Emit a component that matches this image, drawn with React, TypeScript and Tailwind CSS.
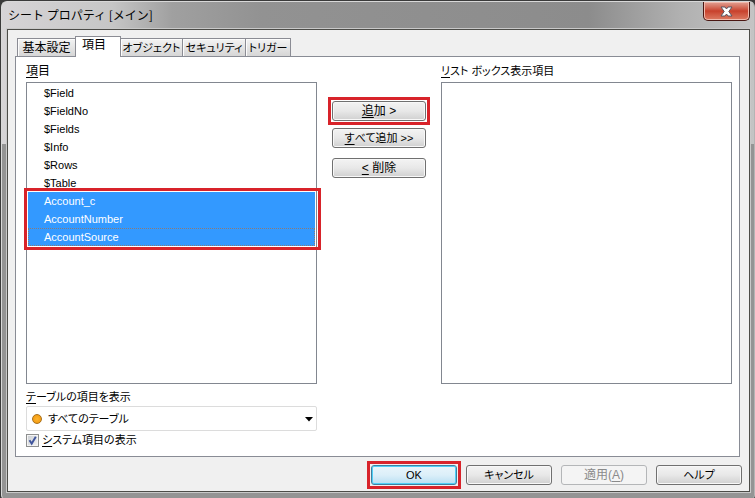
import { useState } from "react";
import type { ReactNode } from "react";
import clsx from "clsx";

const TABS = ["基本設定", "項目", "オブジェクト", "セキュリティ", "トリガー"];

const FIELDS = [
  "$Field",
  "$FieldNo",
  "$Fields",
  "$Info",
  "$Rows",
  "$Table",
  "Account_c",
  "AccountNumber",
  "AccountSource",
];

type PushButtonProps = {
  children: ReactNode;
  className?: string;
  isDefault?: boolean;
  disabled?: boolean;
  marked?: boolean;
};

const AccessKey = ({ children }: { children: ReactNode }) => (
  <span className="underline underline-offset-2">{children}</span>
);

const PushButton = ({
  children,
  className,
  isDefault,
  disabled,
  marked,
}: PushButtonProps) => (
  <div className={clsx("relative", className)}>
    <button
      type="button"
      disabled={disabled}
      className={clsx(
        "flex h-5 w-full items-center justify-center rounded-[3px] border whitespace-pre",
        disabled && "border-[#b4b6b8] bg-[#f4f4f4] text-[#8a8a8a]",
        isDefault &&
          "border-[#3f7f9f] bg-linear-to-b from-[#e9f5fb] via-[#dceff9] via-50% to-[#b8dff3] shadow-[inset_0_0_0_1px_#4fd0f7]",
        !disabled &&
          !isDefault &&
          "border-[#707070] bg-linear-to-b from-[#f3f3f3] via-[#e8e8e8] via-50% to-[#d0d0d0] shadow-[inset_0_0_0_1px_#f8f8f8]",
      )}
    >
      {children}
    </button>
    {marked && (
      <div className="pointer-events-none absolute -inset-1 border-3 border-[#d8232a]" />
    )}
  </div>
);

const TitleBar = () => (
  <header className="flex h-[27px] items-start justify-between pl-px">
    <h1 className="pt-[3px] font-['Noto_Sans_CJK_JP',sans-serif] text-xs leading-5 text-black">
      シート プロパティ [メイン]
    </h1>
    <button
      type="button"
      aria-label="閉じる"
      className="flex h-[19px] w-[47px] items-center justify-center rounded-b-[5px] border border-t-0 border-[#4a1712] bg-linear-to-b from-[#e0a093] from-0% via-[#c8402c] via-50% to-[#dc7a62] shadow-[inset_0_0_0_1px_#f0b9ac]"
    >
      <svg width="13" height="11" viewBox="0 0 13 11">
        <path
          d="M1 1H5L6.500 3L8 1H12L8.800 5.500L12 10H8L6.500 8L5 10H1L4.200 5.500Z"
          fill="#ffffff"
          stroke="#5a5560"
          strokeWidth="1"
        />
      </svg>
    </button>
  </header>
);

const TabStrip = () => {
  const [active, setActive] = useState("項目");

  return (
    <div role="tablist" className="flex items-end pl-0.5">
      {TABS.map((tab) => (
        <button
          key={tab}
          type="button"
          role="tab"
          aria-selected={tab === active}
          onClick={() => setActive(tab)}
          className={clsx(
            "flex items-center justify-center border border-b-0 border-[#8b8c94] whitespace-nowrap",
            tab === active
              ? "-mb-px h-[21px] bg-white pr-2 pb-1"
              : "h-[18px] bg-linear-to-b from-[#f3f3f3] to-[#d6d6d6] shadow-[inset_1px_1px_0_#fcfcfc]",
            tab === "基本設定" && "w-[58px] border-r-0 text-xs",
            tab === "項目" && "w-[46px] text-xs",
            tab === "オブジェクト" && "w-[62px] border-l-0",
            tab === "セキュリティ" && "w-[63px] border-l-0",
            tab === "トリガー" && "w-[45px] border-l-0",
          )}
        >
          {tab}
        </button>
      ))}
    </div>
  );
};

const FieldList = () => {
  const [selected, setSelected] = useState(FIELDS.slice(6));
  const [focused, setFocused] = useState("AccountSource");

  const toggle = (field: string) => {
    setFocused(field);
    setSelected((prev) =>
      prev.includes(field) ? prev.filter((f) => f !== field) : [...prev, field],
    );
  };

  return (
    <div className="relative">
      <ul
        role="listbox"
        aria-labelledby="fields-label"
        aria-multiselectable="true"
        className="h-[302px] border border-[#828790] bg-white p-px"
      >
        {FIELDS.map((field) => (
          <li
            key={field}
            role="option"
            aria-selected={selected.includes(field)}
            onClick={() => toggle(field)}
            className={clsx(
              "h-[18px] border pl-[15px] leading-4",
              selected.includes(field) && "bg-[#3399ff] text-white",
              field === focused
                ? "border-dotted border-[#8a7a78]"
                : "border-transparent",
            )}
          >
            {field}
          </li>
        ))}
      </ul>
      <div className="pointer-events-none absolute top-[106px] -right-1 -left-0.5 h-[62px] border-3 border-[#d8232a]" />
    </div>
  );
};

const TableFilter = () => (
  <div>
    <label htmlFor="table" className="mt-1 block leading-[18px]">
      <AccessKey>テ</AccessKey>ーブルの項目を表示
    </label>
    <div className="relative">
      <select
        id="table"
        className="block h-[25px] w-full appearance-none rounded-xs border border-[#dcdcdc] bg-white pl-[21px]"
      >
        <option>すべてのテーブル</option>
      </select>
      <span className="pointer-events-none absolute top-2 left-1.5 size-2.5 rounded-full border border-[#a8701c] bg-radial from-[#ffb52e] to-[#ee9400]" />
      <svg
        className="pointer-events-none absolute top-[11px] right-1"
        width="8"
        height="5"
        viewBox="0 0 8 5"
      >
        <path d="M0 0H8L4 4.500Z" fill="#000000" />
      </svg>
    </div>
    <div className="flex h-[18px] items-center gap-[3px]">
      <span className="relative block size-[13px]">
        <input
          id="system-fields"
          type="checkbox"
          defaultChecked
          className="peer block size-[13px] appearance-none border border-[#8e8f8f] bg-linear-to-br from-[#c9cdd2] to-[#f4f4f4] shadow-[inset_0_0_0_1px_#f4f4f4]"
        />
        <svg
          className="pointer-events-none absolute inset-0 hidden peer-checked:block"
          width="13"
          height="13"
          viewBox="0 0 13 13"
        >
          <path
            d="M3.500 6.200L5.700 9.600L9.800 2.800"
            fill="none"
            stroke="#3f549c"
            strokeWidth="1.900"
          />
        </svg>
      </span>
      <label htmlFor="system-fields">
        <AccessKey>シ</AccessKey>ステム項目の表示
      </label>
    </div>
  </div>
);

const App = () => {
  return (
    <div className="bg-[#3a3a3a] pt-px pl-px font-['Liberation_Sans','Noto_Sans_CJK_JP',sans-serif] text-[11px] leading-4 text-black">
      <div className="rounded-t-md rounded-b-sm border border-[#d8d8d8] border-r-[#b4b4b4] border-b-[#8e8e8e] bg-[linear-gradient(to_bottom,transparent_142px,#949494_142px),linear-gradient(to_right,#d6d4d6_0,#c6c6c6_110px,#a0a0a0_170px,#929292_260px,#8c8c8c_78%,#b0b0b0_90%,#c4c4c4_100%)] pr-1 pb-[6px] pl-[5px]">
        <TitleBar />
        <main className="border border-[#4c4c48] bg-[#f0f0f0] pt-1.5 pr-[9px] pb-1.5 pl-[7px] shadow-[0_0_0_1px_#c9c9c9] [font-feature-settings:'palt']">
          <TabStrip />
          <section className="flex justify-between border border-[#898c95] bg-white pt-1.5 pr-[7px] pb-[7px] pl-2.5">
            <div className="w-[291px]">
              <h2 id="fields-label" className="h-[19px] text-xs leading-[16px]">
                <AccessKey>項</AccessKey>目
              </h2>
              <FieldList />
              <TableFilter />
            </div>
            <div className="w-[94px] pt-[38px]">
              <PushButton className="text-xs" marked>
                <AccessKey>追</AccessKey>加 &gt;
              </PushButton>
              <PushButton className="mt-[7px]">
                <AccessKey>す</AccessKey>べて追加 &gt;&gt;
              </PushButton>
              <PushButton className="mt-2.5 text-xs">
                <AccessKey>&lt;</AccessKey> 削除
              </PushButton>
            </div>
            <div className="w-[291px]">
              <h2 id="listbox-label" className="h-[19px] leading-[16px]">
                <AccessKey>リ</AccessKey>スト ボックス表示項目
              </h2>
              <ul
                role="listbox"
                aria-labelledby="listbox-label"
                className="h-[302px] border border-[#828790] bg-white"
              />
            </div>
          </section>
          <footer className="-mr-0.5 flex justify-end gap-[9px] pt-2">
            <PushButton className="w-[86px]" isDefault marked>
              OK
            </PushButton>
            <PushButton className="w-[86px]">キャンセル</PushButton>
            <PushButton className="w-[86px] text-xs" disabled>
              適用(<AccessKey>A</AccessKey>)
            </PushButton>
            <PushButton className="w-[86px]">ヘルプ</PushButton>
          </footer>
        </main>
      </div>
    </div>
  );
};

export default App;
